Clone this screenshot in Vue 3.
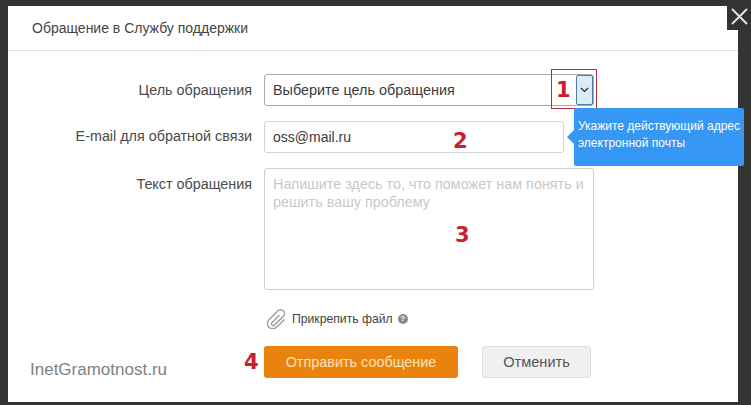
<script setup>
const purpose = 'Выберите цель обращения'
</script>

<template>
  <div class="page">
    <div class="modal">
      <div class="head">Обращение в Службу поддержки</div>
      <div class="form">
        <label class="lbl lbl-sel">Цель обращения</label>
        <div class="select">
          <span>{{ purpose }}</span>
          <span class="arrow">
            <svg width="9" height="6" viewBox="0 0 9 6"><path d="M1 1l3.500 3.500L8 1" fill="none" stroke="#223" stroke-width="1.200"/></svg>
          </span>
        </div>
        <label class="lbl lbl-mail">E-mail для обратной связи</label>
        <div class="input">oss@mail.ru</div>
        <label class="lbl lbl-text">Текст обращения</label>
        <div class="textarea">Напишите здесь то, что поможет нам понять и решить вашу проблему</div>
        <div class="attach">
          <svg width="20" height="20" viewBox="0 0 20 20"><path d="M13 6.500L6 13.500a1.800 1.800 0 0 0 2.600 2.600L17.300 7.200a3.800 3.800 0 0 0-5.400-5.400L3 10.700a5.300 5.300 0 0 0 7.500 7.500L18 11" fill="none" stroke="#9c9c9c" stroke-width="1.400" stroke-linecap="round"/></svg>
          <span>Прикрепить файл</span>
          <span class="help">?</span>
        </div>
        <div class="buttons">
          <button class="send">Отправить сообщение</button>
          <button class="cancel">Отменить</button>
        </div>
      </div>
      <div class="brand">InetGramotnost.ru</div>
    </div>

    <div class="close">
      <svg width="19" height="19" viewBox="0 0 19 19"><path d="M2 2l15 15M17 2L2 17" stroke="#e8e8e8" stroke-width="1.800"/></svg>
    </div>
    <div class="mark-box"></div>
    <span class="num n1">1</span>
    <span class="num n2">2</span>
    <span class="num n3">3</span>
    <span class="num n4">4</span>
    <div class="tip">Укажите действующий адрес<br>электронной почты</div>
  </div>
</template>

<style>
html, body { margin: 0; background: #333432; }
</style>

<style scoped>
.page {
  position: relative;
  width: 751px;
  height: 405px;
  overflow: hidden;
  background: #333432;
  font-family: "Liberation Sans", Arial, sans-serif;
  padding: 6px 0 0 8px;
  box-sizing: border-box;
}
.modal {
  position: relative;
  width: 730px;
  height: 396px;
  background: #fff;
}
.head {
  height: 45px;
  box-sizing: border-box;
  border-bottom: 1px solid #dfdfdf;
  padding: 14px 0 0 24px;
  font-size: 14px;
  line-height: 17px;
  color: #444;
}
.form {
  display: grid;
  grid-template-columns: 244px 330px;
  column-gap: 12px;
  padding-top: 23px;
  align-items: start;
}
.lbl {
  justify-self: end;
  font-size: 14.35px;
  line-height: 17px;
  color: #4a4a4a;
}
.lbl-sel { margin-top: 8px; }
.lbl-mail { margin-top: 22px; }
.lbl-text { margin-top: 23px; }
.select {
  box-sizing: border-box;
  height: 32px;
  border: 1px solid #a9a9a9;
  border-radius: 3px;
  padding-left: 8px;
  display: flex;
  align-items: center;
  justify-content: space-between;
  font-size: 14.4px;
  color: #3a3a3a;
}
.arrow {
  box-sizing: border-box;
  width: 17px;
  height: 30px;
  background: #dcebf8;
  border: 1px solid #4d7da3;
  border-radius: 2px;
  display: flex;
  align-items: center;
  justify-content: center;
}
.input {
  box-sizing: border-box;
  margin-top: 15px;
  width: 300px;
  height: 32px;
  border: 1px solid #d4d4d4;
  border-radius: 3px;
  padding-left: 8px;
  font-size: 14px;
  line-height: 30px;
  color: #3a3a3a;
}
.textarea {
  box-sizing: border-box;
  margin-top: 15px;
  height: 122px;
  border: 1px solid #cfcfcf;
  border-radius: 3px;
  padding: 6px 8px;
  font-size: 14.4px;
  line-height: 18px;
  color: #c8c8c8;
}
.attach {
  grid-column: 2;
  margin-top: 19px;
  height: 20px;
  display: flex;
  align-items: center;
  font-size: 12.2px;
  color: #444;
}
.attach svg { margin-right: 6px; margin-left: 2px; }
.help {
  margin-left: 5px;
  width: 10px;
  height: 10px;
  border-radius: 50%;
  background: #8a8a8a;
  color: #fff;
  font-size: 8px;
  font-weight: 700;
  line-height: 10px;
  text-align: center;
}
.buttons {
  grid-column: 2;
  margin-top: 17px;
  display: flex;
  gap: 24px;
}
button {
  font-family: inherit;
  height: 32px;
  border-radius: 3px;
  padding: 0;
  box-sizing: border-box;
}
.send {
  width: 194px;
  background: #ea830e;
  border: 0;
  color: #fde3b8;
  font-size: 14.4px;
}
.cancel {
  width: 109px;
  background: #f0f0f0;
  border: 1px solid #dcdcdc;
  color: #555;
  font-size: 14.6px;
}
.brand {
  position: absolute;
  left: 22px;
  top: 354px;
  font-size: 17px;
  line-height: 20px;
  color: #808080;
}
.close {
  position: absolute;
  left: 727px;
  top: 2px;
  width: 24px;
  height: 28px;
  background: #333432;
  display: flex;
  align-items: center;
  justify-content: center;
}
.mark-box {
  position: absolute;
  left: 551px;
  top: 69px;
  width: 44px;
  height: 38px;
  border: 1px solid #b5303a;
}
.num {
  position: absolute;
  font-family: "DejaVu Sans", sans-serif;
  font-size: 21px;
  font-weight: 700;
  line-height: 24px;
  color: #c8202c;
}
.n1 { left: 556px; top: 78px; }
.n2 { left: 453px; top: 129px; }
.n3 { left: 455px; top: 223px; }
.n4 { left: 244px; top: 350px; }
.tip {
  position: absolute;
  left: 574px;
  top: 108px;
  width: 170px;
  height: 58px;
  box-sizing: border-box;
  padding: 10px 0 0 4px;
  background: #3797f4;
  border-radius: 2px;
  color: #fff;
  font-size: 12px;
  line-height: 17px;
  white-space: nowrap;
}
.tip::before {
  content: "";
  position: absolute;
  left: -7px;
  top: 22px;
  border: 7px solid transparent;
  border-left: 0;
  border-right-color: #3797f4;
}
</style>
